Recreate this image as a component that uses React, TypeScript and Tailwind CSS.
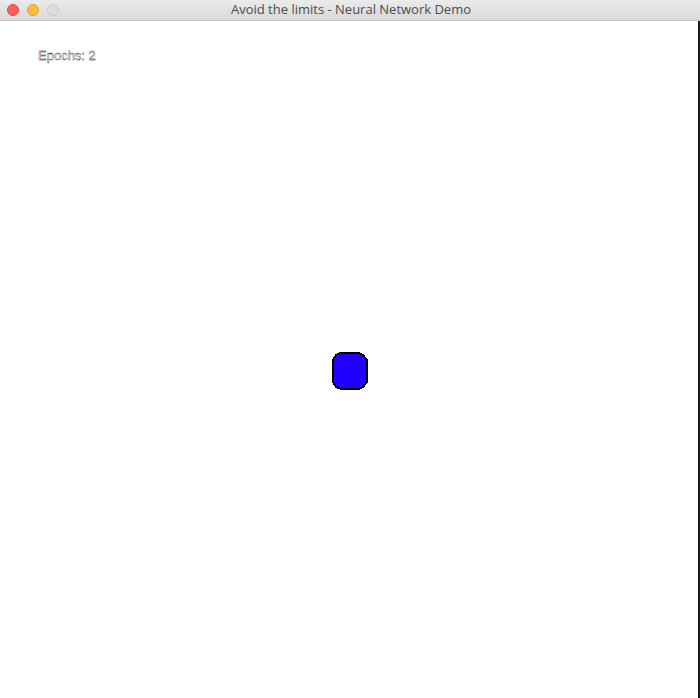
const TrafficLights = () => (
  <div className="flex items-center gap-[8px] pl-[7px]">
    <div className="w-[12px] h-[12px] rounded-full bg-[#fc605c] border border-[#e2463f]" />
    <div className="w-[12px] h-[12px] rounded-full bg-[#fdbc40] border border-[#e0a12d]" />
    <div className="w-[12px] h-[12px] rounded-full bg-[#dcdcdc] border border-[#c8c8c8]" />
  </div>
)

// the agent, drawn on the canvas as a rough circle
const Agent = () => (
  <svg width="36" height="38" viewBox="0 0 36 38" shapeRendering="crispEdges">
    <polygon
      points="8,1 27,1 31,3 35,8 35,30 31,35 27,37 9,37 4,35 1,30 1,8 4,3"
      fill="#2200ff"
      stroke="#000"
      strokeWidth="2"
      strokeLinejoin="round"
    />
  </svg>
)

export default function App() {
  return (
    <div className="w-[700px] h-[698px] flex flex-col bg-white overflow-hidden font-['Liberation_Sans',sans-serif]">
      {/* window title bar */}
      <div className="relative h-[21px] flex items-center bg-gradient-to-b from-[#ebebeb] to-[#d9d9d9] border-b border-[#c4c4c4]">
        <TrafficLights />
        <div className="absolute inset-0 flex items-center justify-center text-[13px] text-[#4d4d4d] font-['Open_Sans',sans-serif] pl-[2px]">
          Avoid the limits - Neural Network Demo
        </div>
      </div>

      <div className="flex-1 flex">
        {/* canvas */}
        <div className="flex-1 flex flex-col bg-white">
          <div className="pl-[38px] pt-[27px] text-[13px] leading-[15px] text-white [-webkit-text-stroke:0.35px_#111] font-['Liberation_Sans',sans-serif]">
            Epochs: 2
          </div>
          <div className="flex justify-center pt-[289px] pl-[2px]">
            <Agent />
          </div>
        </div>
        <div className="w-[2px] bg-[#1a1a1a]" />
      </div>
    </div>
  )
}
